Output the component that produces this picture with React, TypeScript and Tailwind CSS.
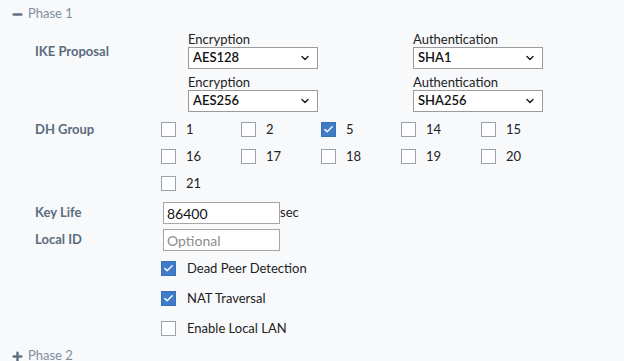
import { Check, ChevronDown, Minus, Plus } from "lucide-react";

const Box = ({ checked }: { checked?: boolean }) =>
  checked ? (
    <span className="flex h-[15px] w-[15px] items-center justify-center bg-[#3f7bc6] border border-[#3a70b4]">
      <Check className="h-[11px] w-[11px] text-white" strokeWidth={3} />
    </span>
  ) : (
    <span className="h-[15px] w-[15px] border border-[#9aa3ad] bg-white" />
  );

const Select = ({ label, value }: { label: string; value: string }) => (
  <div className="flex flex-col">
    <span className="text-[13px] leading-[14px] text-[#222]">{label}</span>
    <div className="mt-[1px] flex h-[22px] w-[130px] items-center justify-between border border-[#9b9b9b] bg-white pl-[4px] pr-[6px]">
      <span className="text-[13px] font-semibold text-[#111]">{value}</span>
      <ChevronDown className="h-[12px] w-[12px] text-[#222]" strokeWidth={3} />
    </div>
  </div>
);

const Label = ({ children, className = "" }: { children: string; className?: string }) => (
  <div className={`w-[126px] shrink-0 text-[13px] font-bold text-[#5a6c7e] ${className}`}>{children}</div>
);

const groups = [
  ["1", "2", "5", "14", "15"],
  ["16", "17", "18", "19", "20"],
  ["21"],
];

export default function App() {
  return (
    <div className="h-[361px] w-[624px] overflow-hidden bg-[#f8f9fb] font-['Lato',sans-serif]">
      <div className="flex h-[16px] items-center gap-[4px] pl-[11px] mt-[6px] text-[13px] text-[#7f8e9c]">
        <Minus className="h-[13px] w-[13px] text-[#5f6f80]" strokeWidth={4.5} />
        <span>Phase 1</span>
      </div>

      <div className="pl-[35px]">
        <div className="mt-[10px] flex">
          <Label className="pt-[10px]">IKE Proposal</Label>
          <div className="ml-[27px] flex flex-col gap-[6px]">
            <div className="flex gap-[95px]">
              <Select label="Encryption" value="AES128" />
              <Select label="Authentication" value="SHA1" />
            </div>
            <div className="flex gap-[95px]">
              <Select label="Encryption" value="AES256" />
              <Select label="Authentication" value="SHA256" />
            </div>
          </div>
        </div>

        <div className="mt-[8px] flex">
          <Label className="leading-[19px]">DH Group</Label>
          <div className="flex flex-col gap-[8px]">
            {groups.map((row, i) => (
              <div key={i} className="flex h-[19px]">
                {row.map((g) => (
                  <div key={g} className="flex w-[80px] items-center gap-[10px] text-[13px] text-[#222]">
                    <Box checked={g === "5"} />
                    <span>{g}</span>
                  </div>
                ))}
              </div>
            ))}
          </div>
        </div>

        <div className="mt-[9px] flex items-center">
          <Label>Key Life</Label>
          <div className="ml-[2px] flex h-[22px] w-[117px] items-center border border-[#a5a5a5] bg-white px-[3px] text-[14px] text-[#111]">
            86400
          </div>
          <span className="text-[13px] text-[#222]">sec</span>
        </div>

        <div className="mt-[5px] flex items-center">
          <Label>Local ID</Label>
          <div className="ml-[2px] flex h-[22px] w-[117px] items-center border border-[#a5a5a5] bg-white px-[3px] text-[14px] text-[#8c8c8c]">
            Optional
          </div>
        </div>

        <div className="ml-[126px] mt-[10px] flex flex-col gap-[15px] text-[13px] leading-[15px] text-[#222]">
          <div className="flex h-[15px] items-center gap-[11px]">
            <Box checked />
            <span>Dead Peer Detection</span>
          </div>
          <div className="flex h-[15px] items-center gap-[11px]">
            <Box checked />
            <span>NAT Traversal</span>
          </div>
          <div className="flex h-[15px] items-center gap-[11px]">
            <Box />
            <span>Enable Local LAN</span>
          </div>
        </div>
      </div>

      <div className="mt-[12px] flex h-[16px] items-center gap-[4px] pl-[11px] text-[13px] text-[#7f8e9c]">
        <Plus className="h-[13px] w-[13px] text-[#5f6f80]" strokeWidth={4.5} />
        <span>Phase 2</span>
      </div>
    </div>
  );
}
